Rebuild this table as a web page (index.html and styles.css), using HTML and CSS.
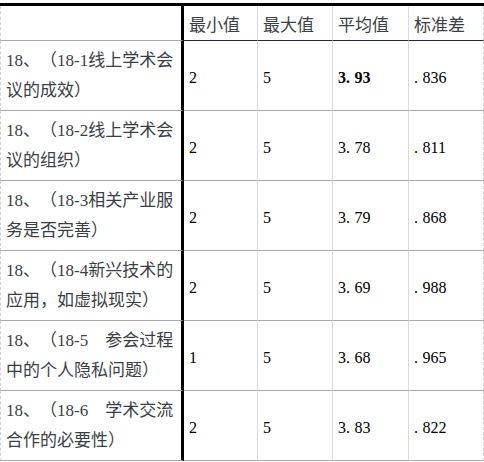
FILE: index.html
```html
<!DOCTYPE html>
<html lang="zh">
<head>
<meta charset="utf-8">
<link rel="stylesheet" href="styles.css">
</head>
<body>
<div class="sheet">
  <div class="cell label head-blank"></div>
  <div class="cell head">最小值</div>
  <div class="cell head">最大值</div>
  <div class="cell head">平均值</div>
  <div class="cell head last">标准差</div>

  <div class="cell label">18、（18-1线上学术会<br>议的成效）</div>
  <div class="cell num">2</div>
  <div class="cell num">5</div>
  <div class="cell num bold">3<span class="dot">.</span>93</div>
  <div class="cell num last"><span class="dot">.</span>836</div>

  <div class="cell label">18、（18-2线上学术会<br>议的组织）</div>
  <div class="cell num">2</div>
  <div class="cell num">5</div>
  <div class="cell num">3<span class="dot">.</span>78</div>
  <div class="cell num last"><span class="dot">.</span>811</div>

  <div class="cell label">18、（18-3相关产业服<br>务是否完善）</div>
  <div class="cell num">2</div>
  <div class="cell num">5</div>
  <div class="cell num">3<span class="dot">.</span>79</div>
  <div class="cell num last"><span class="dot">.</span>868</div>

  <div class="cell label">18、（18-4新兴技术的<br>应用，如虚拟现实）</div>
  <div class="cell num">2</div>
  <div class="cell num">5</div>
  <div class="cell num">3<span class="dot">.</span>69</div>
  <div class="cell num last"><span class="dot">.</span>988</div>

  <div class="cell label">18、（18-5　参会过程<br>中的个人隐私问题）</div>
  <div class="cell num">1</div>
  <div class="cell num">5</div>
  <div class="cell num">3<span class="dot">.</span>68</div>
  <div class="cell num last"><span class="dot">.</span>965</div>

  <div class="cell label">18、（18-6　学术交流<br>合作的必要性）</div>
  <div class="cell num">2</div>
  <div class="cell num">5</div>
  <div class="cell num">3<span class="dot">.</span>83</div>
  <div class="cell num last"><span class="dot">.</span>822</div>
</div>
</body>
</html>
```

FILE: styles.css
```css
* { box-sizing: border-box; }
html, body { margin: 0; padding: 0; background: #fff; }

.sheet {
  margin-top: 3px;
  width: 484px;
  display: grid;
  grid-template-columns: 184px 74px 75px 76px 75px;
  grid-template-rows: 35px repeat(6, 70px);
  border-top: 3px solid #000;
}

.cell {
  display: flex;
  align-items: center;
  border-right: 1px solid #dadada;
  border-bottom: 1px solid #aaaaaa;
  padding-left: 5px;
  white-space: nowrap;
  text-spacing-trim: space-all;
}

.cell.last { border-right: 1px dashed #cfcfcf; }

.label {
  border-left: 1px dashed #cfcfcf;
  border-right: 3px solid #000;
  padding-left: 5px;
  font-family: "Liberation Serif", "Noto Sans CJK SC", serif;
  font-size: 17px;
  line-height: 30px;
  color: #3a3f47;
}

.head {
  font-family: "Noto Sans CJK SC", sans-serif;
  font-size: 17px;
  color: #3a3f47;
  border-bottom: 1px solid #1e2b38;
  padding-top: 1px;
}

.head-blank { border-bottom: 1px solid #aaaaaa; }

.num {
  font-family: "Liberation Serif", serif;
  font-size: 16px;
  color: #000;
  padding-top: 4px;
}

.bold { font-weight: bold; }

.dot {
  display: inline-block;
  width: 8.5px;
}
```
